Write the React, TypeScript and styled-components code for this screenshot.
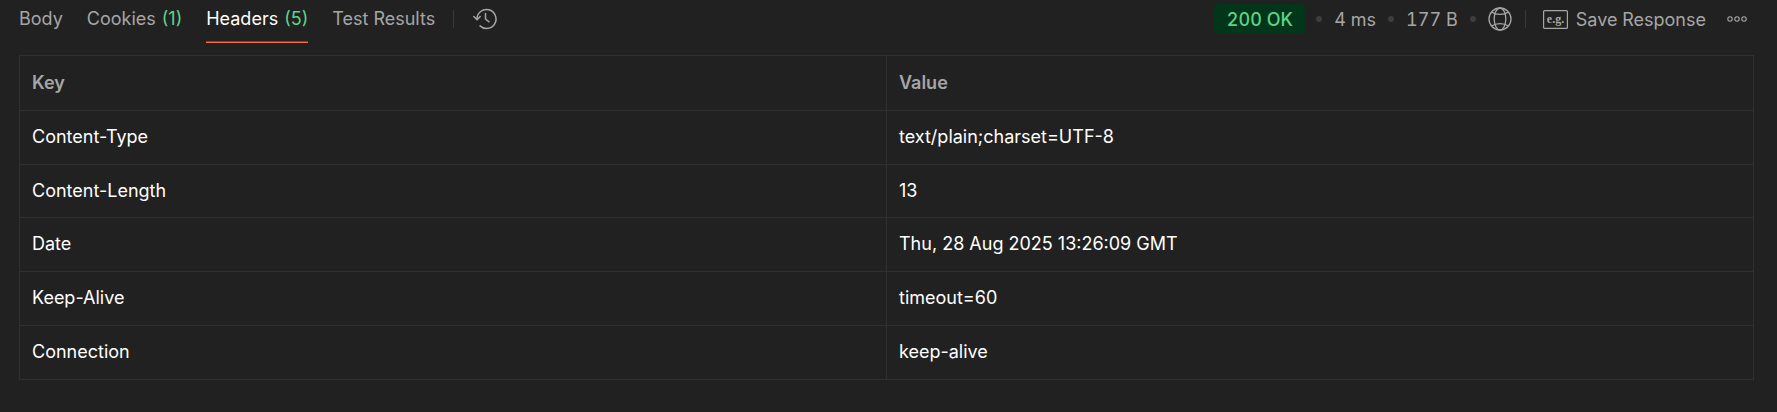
import { Fragment } from 'react';
import styled, { createGlobalStyle } from 'styled-components';

const GlobalStyle = createGlobalStyle`
  html, body {
    margin: 0;
    height: 100%;
    background-color: #212121;
  }
  body {
    font-family: 'Inter', 'Liberation Sans', sans-serif;
    font-size: 18px;
    overflow: hidden;
  }
`;

const Page = styled.div`
  width: 1777px;
  height: 412px;
  background-color: #212121;
  color: #fff;
`;

const TopBar = styled.div`
  display: flex;
  align-items: flex-start;
  justify-content: space-between;
  height: 43px;
  padding: 0 30px 0 19px;
`;

const Tabs = styled.div`
  display: flex;
  align-items: stretch;
  height: 100%;
  gap: 24px;
`;

const Tab = styled.div<{ $active?: boolean }>`
  display: flex;
  align-items: center;
  gap: 6px;
  height: 43px;
  padding-bottom: 6px;
  box-sizing: border-box;
  color: ${({ $active }) => ($active ? '#ffffff' : '#a6a6a6')};
  border-bottom: 1px solid ${({ $active }) => ($active ? '#ff6c37' : 'transparent')};
  box-shadow: ${({ $active }) => ($active ? 'inset 0 -1px 0 #7a4430' : 'none')};
`;

const Count = styled.span`
  color: #5fd38a;
`;

const Divider = styled.div`
  width: 1px;
  height: 18px;
  background-color: #383838;
`;

const HistoryGroup = styled.div`
  display: flex;
  align-items: center;
  gap: 18px;
  height: 38px;
  margin-left: -6px;
`;

const Meta = styled.div`
  display: flex;
  align-items: center;
  height: 38px;
  color: #a6a6a6;
  font-variant-numeric: tabular-nums;
`;

const StatusBadge = styled.div`
  display: flex;
  align-items: center;
  justify-content: center;
  width: 91px;
  height: 30px;
  margin-right: -1px;
  border-radius: 4px;
  background-color: #02361a;
  color: #5fd38a;
  font-weight: 500;
`;

const Dot = styled.span`
  width: 6px;
  height: 6px;
  margin: 0 12px;
  border-radius: 50%;
  background-color: #3d3d3d;
`;

const MetaDivider = styled(Divider)`
  margin: 0 17px 0 13px;
`;

const SaveButton = styled.div`
  display: flex;
  align-items: center;
  gap: 8px;
  margin-right: 21px;
`;

const Table = styled.div`
  display: grid;
  grid-template-columns: 867px 867px;
  grid-template-rows: 55px 54px 53px 54px 54px 54px;
  margin: 12px 0 0 19px;
  width: 1735px;
  border-top: 1px solid #303030;
  border-left: 1px solid #303030;
  box-sizing: border-box;
`;

const Cell = styled.div<{ $head?: boolean }>`
  display: flex;
  align-items: center;
  box-sizing: border-box;
  padding: 0 0 2px 12px;
  border-right: 1px solid #303030;
  border-bottom: 1px solid #303030;
  color: ${({ $head }) => ($head ? '#a6a6a6' : '#ffffff')};
  font-weight: ${({ $head }) => ($head ? 600 : 400)};
`;

const Icon = styled.svg`
  display: block;
  flex: none;
  fill: none;
  stroke: #a6a6a6;
`;

const HistoryIcon = () => (
  <Icon width="26" height="26" viewBox="0 0 26 26" strokeWidth="1.5" strokeLinecap="round" strokeLinejoin="round">
    <path d="M5 13a9.5 9.5 0 1 1 3 6.9" />
    <path d="M1.8 10.5 5 13.8l3.2-3.3" />
    <path d="M13.5 7.5V13l3.5 2.8" />
  </Icon>
);

const GlobeIcon = () => (
  <Icon width="24" height="24" viewBox="0 0 24 24" strokeWidth="1.3">
    <circle cx="12" cy="12" r="11" />
    <ellipse cx="12" cy="12" rx="5.8" ry="11" />
    <path d="M3.6 5c2.2 1.6 5 2.4 8.4 2.4s6.2-.8 8.4-2.4M3.6 19c2.2-1.6 5-2.4 8.4-2.4s6.2.8 8.4 2.4" />
  </Icon>
);

const ExampleIcon = () => (
  <Icon width="25" height="19" viewBox="0 0 25 19" strokeWidth="1.2">
    <rect x="0.6" y="0.6" width="23.8" height="17.8" rx="1" />
    <text x="12.5" y="13" textAnchor="middle" fontFamily="'Liberation Serif', serif" fontSize="12" fontWeight="700" fill="#a6a6a6" stroke="none">
      e.g.
    </text>
  </Icon>
);

const MoreIcon = () => (
  <Icon width="20" height="6" viewBox="0 0 20 6" strokeWidth="1.1">
    <circle cx="3" cy="3" r="2.2" />
    <circle cx="10" cy="3" r="2.2" />
    <circle cx="17" cy="3" r="2.2" />
  </Icon>
);

const rows = [
  ['Content-Type', 'text/plain;charset=UTF-8'],
  ['Content-Length', '13'],
  ['Date', 'Thu, 28 Aug 2025 13:26:09 GMT'],
  ['Keep-Alive', 'timeout=60'],
  ['Connection', 'keep-alive'],
];

const App = () => {
  return (
    <Page>
      <GlobalStyle />
      <TopBar>
        <Tabs>
          <Tab>Body</Tab>
          <Tab>
            Cookies <Count>(1)</Count>
          </Tab>
          <Tab $active>
            Headers <Count>(5)</Count>
          </Tab>
          <Tab>Test Results</Tab>
          <HistoryGroup>
            <Divider />
            <HistoryIcon />
          </HistoryGroup>
        </Tabs>
        <Meta>
          <StatusBadge>200 OK</StatusBadge>
          <Dot />
          <span>4 ms</span>
          <Dot />
          <span>177 B</span>
          <Dot />
          <GlobeIcon />
          <MetaDivider />
          <SaveButton>
            <ExampleIcon />
            Save Response
          </SaveButton>
          <MoreIcon />
        </Meta>
      </TopBar>
      <Table>
        <Cell $head>Key</Cell>
        <Cell $head>Value</Cell>
        {rows.map(([key, value]) => (
          <Fragment key={key}>
            <Cell>{key}</Cell>
            <Cell>{value}</Cell>
          </Fragment>
        ))}
      </Table>
    </Page>
  );
};

export default App;
